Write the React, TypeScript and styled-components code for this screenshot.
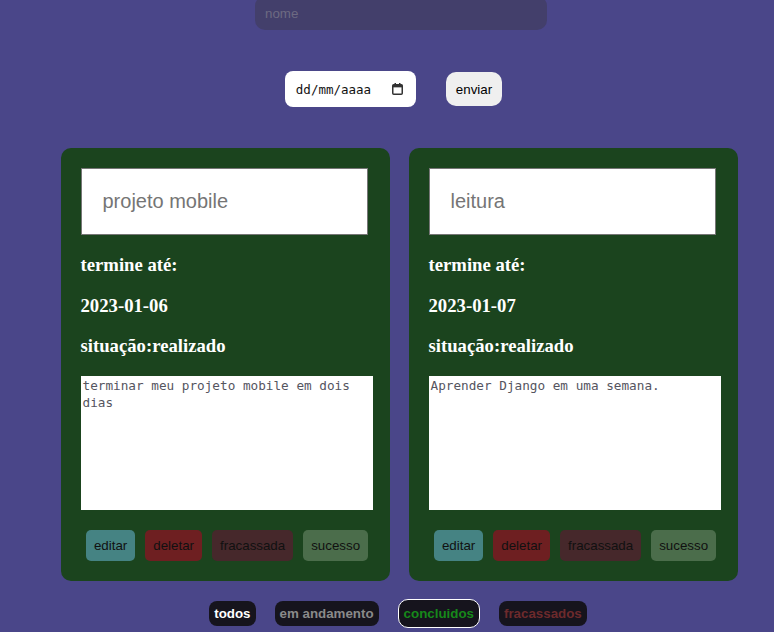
import React from "react";
import styled, { createGlobalStyle } from "styled-components";

const GlobalStyle = createGlobalStyle`
  html, body {
    margin: 0;
    padding: 0;
    background: #4a4689;
    overflow: hidden;
    font-family: "Liberation Sans", Arial, sans-serif;
  }
  * { box-sizing: border-box; }
`;

const Page = styled.div`
  width: 774px;
  height: 632px;
  padding-left: 24px;
  display: flex;
  flex-direction: column;
  align-items: center;
`;

const NameInput = styled.input`
  width: 292px;
  height: 34px;
  margin-top: -4px;
  margin-left: 4px;
  border: none;
  border-radius: 10px;
  background: #433f6b;
  padding: 0 10px;
  font-family: "Liberation Sans", Arial, sans-serif;
  font-size: 13.33px;
  color: #ddd;
  outline: none;
  &::placeholder { color: #6d6a82; }
`;

const FormRow = styled.div`
  margin-top: 41px;
  margin-right: 11px;
  display: flex;
  align-items: center;
  gap: 30px;
`;

const DateBox = styled.div`
  width: 131px;
  height: 36px;
  background: #fff;
  border-radius: 8px;
  padding: 0 13px 0 11px;
  display: flex;
  align-items: center;
  justify-content: space-between;
`;

const DateText = styled.span`
  font-family: "DejaVu Sans Mono", "Liberation Mono", monospace;
  font-size: 12.5px;
  color: #111;
`;

const SendButton = styled.button`
  height: 34px;
  padding: 0 10px;
  border: none;
  border-radius: 10px;
  background: #efefef;
  font-family: "Liberation Sans", Arial, sans-serif;
  font-size: 13.33px;
  color: #000;
`;

const Cards = styled.div`
  margin-top: 41px;
  display: flex;
  gap: 19px;
`;

const Card = styled.div`
  width: 329px;
  height: 433px;
  padding: 20px;
  border-radius: 10px;
  background: #1b441e;
  display: flex;
  flex-direction: column;
  align-items: flex-start;
`;

const TitleInput = styled.input`
  width: 287px;
  height: 67px;
  flex-shrink: 0;
  border: 1px solid #767676;
  padding: 0 21px;
  background: #fff;
  font-family: "Liberation Sans", Arial, sans-serif;
  font-size: 20px;
  color: #757575;
  outline: none;
`;

const Heading = styled.h3`
  margin: 19px 0 0;
  font-family: "Liberation Serif", "Times New Roman", serif;
  font-size: 18.72px;
  font-weight: bold;
  line-height: 22px;
  color: #fff;
  &:nth-of-type(3) { margin-top: 18px; }
`;

const Notes = styled.textarea`
  width: 292px;
  height: 134px;
  flex-shrink: 0;
  margin-top: 19px;
  padding: 2px;
  border: none;
  resize: none;
  background: #fff;
  font-family: "DejaVu Sans Mono", "Liberation Mono", monospace;
  font-size: 12.7px;
  line-height: 16.5px;
  color: #55555f;
  outline: none;
`;

const ActionRow = styled.div`
  margin-top: 20px;
  width: 289px;
  padding-left: 4px;
  display: flex;
  justify-content: center;
  gap: 10px;
`;

const ActionButton = styled.button<{ $bg: string }>`
  height: 31px;
  padding: 0 8px;
  border: none;
  border-radius: 5px;
  background: ${(p) => p.$bg};
  font-family: "Liberation Sans", Arial, sans-serif;
  font-size: 13.33px;
  color: #111;
`;

const Filters = styled.div`
  margin-top: 18px;
  margin-right: 2px;
  display: flex;
  align-items: center;
  gap: 19px;
`;

const FilterButton = styled.button<{ $color: string; $active?: boolean }>`
  height: ${(p) => (p.$active ? "29px" : "25px")};
  padding: 0 5px;
  border: ${(p) => (p.$active ? "1px solid #fff" : "none")};
  border-radius: ${(p) => (p.$active ? "10px" : "8px")};
  background: #16141d;
  font-family: "Liberation Sans", Arial, sans-serif;
  font-size: 13.33px;
  font-weight: bold;
  color: ${(p) => p.$color};
`;

const CalendarIcon = () => (
  <svg width="11" height="12" viewBox="0 0 11 12">
    <rect x="0.75" y="1.75" width="9.5" height="9.5" rx="1" fill="none" stroke="#333" strokeWidth="1.5" />
    <rect x="0.75" y="1.75" width="9.5" height="2.6" fill="#333" />
    <rect x="2.5" y="0" width="1.5" height="2" fill="#333" />
    <rect x="7" y="0" width="1.5" height="2" fill="#333" />
  </svg>
);

type Task = { title: string; date: string; status: string; notes: string };

const tasks: Task[] = [
  {
    title: "projeto mobile",
    date: "2023-01-06",
    status: "realizado",
    notes: "terminar meu projeto mobile em dois dias",
  },
  {
    title: "leitura",
    date: "2023-01-07",
    status: "realizado",
    notes: "Aprender Django em uma semana.",
  },
];

const actions = [
  { label: "editar", bg: "#458383" },
  { label: "deletar", bg: "#6e1f21" },
  { label: "fracassada", bg: "#46282b" },
  { label: "sucesso", bg: "#4b6d4b" },
];

export default function App() {
  return (
    <>
      <GlobalStyle />
      <Page>
        <NameInput placeholder="nome" />
        <FormRow>
          <DateBox>
            <DateText>dd/mm/aaaa</DateText>
            <CalendarIcon />
          </DateBox>
          <SendButton>enviar</SendButton>
        </FormRow>
        <Cards>
          {tasks.map((t) => (
            <Card key={t.title}>
              <TitleInput defaultValue={t.title} />
              <Heading>termine até:</Heading>
              <Heading>{t.date}</Heading>
              <Heading>situação:{t.status}</Heading>
              <Notes defaultValue={t.notes} />
              <ActionRow>
                {actions.map((a) => (
                  <ActionButton key={a.label} $bg={a.bg}>
                    {a.label}
                  </ActionButton>
                ))}
              </ActionRow>
            </Card>
          ))}
        </Cards>
        <Filters>
          <FilterButton $color="#ffffff">todos</FilterButton>
          <FilterButton $color="#8a8a8a">em andamento</FilterButton>
          <FilterButton $color="#16891a" $active>
            concluidos
          </FilterButton>
          <FilterButton $color="#6d2a2c">fracassados</FilterButton>
        </Filters>
      </Page>
    </>
  );
}
